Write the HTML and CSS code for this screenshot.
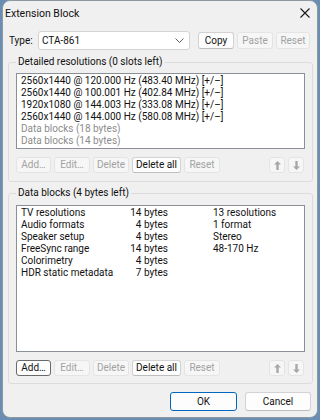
FILE: index.html
```html
<!DOCTYPE html>
<html lang="en">
<head>
  <meta charset="UTF-8">
  <title>Extension Block</title>
  <link rel="stylesheet" href="styles.css">
</head>
<body>
  <div class="window">
    <div class="titlebar">
      <span class="title">Extension Block</span>
      <svg class="close" width="10" height="10" viewBox="0 0 10 10"><path d="M0.5 0.5 L9.5 9.5 M9.5 0.5 L0.5 9.5" stroke="#1a1a1a" stroke-width="1.1" fill="none"/></svg>
    </div>
    <div class="type-row">
      <label class="type-label">Type:</label>
      <div class="combo">
        <span>CTA-861</span>
        <svg width="9" height="5" viewBox="0 0 9 5"><polyline points="0.5,0.5 4.5,4.5 8.5,0.5" stroke="#606060" fill="none"/></svg>
      </div>
      <button class="btn top copy">Copy</button>
      <button class="btn top" disabled>Paste</button>
      <button class="btn top reset" disabled>Reset</button>
    </div>

    <fieldset class="group group-res">
      <legend>Detailed resolutions (0 slots left)</legend>
      <div class="listbox list-res">
        <div class="row">2560x1440 @ 120.000 Hz (483.40 MHz) [+/–]</div>
        <div class="row">2560x1440 @ 100.001 Hz (402.84 MHz) [+/–]</div>
        <div class="row">1920x1080 @ 144.003 Hz (333.08 MHz) [+/–]</div>
        <div class="row">2560x1440 @ 144.000 Hz (580.08 MHz) [+/–]</div>
        <div class="row muted">Data blocks (18 bytes)</div>
        <div class="row muted">Data blocks (14 bytes)</div>
      </div>
      <div class="btn-row">
        <button class="btn w35" disabled>Add…</button>
        <button class="btn w36" disabled>Edit…</button>
        <button class="btn w36" disabled>Delete</button>
        <button class="btn w49">Delete all</button>
        <button class="btn w36" disabled>Reset</button>
        <span class="spacer"></span>
        <button class="btn arrow" disabled><svg width="7" height="9" viewBox="0 0 7 9"><path d="M3.5 0 L7 3.5 H4.7 V9 H2.3 V3.5 H0 Z" fill="#a8a8a8"/></svg></button>
        <button class="btn arrow" disabled><svg width="7" height="9" viewBox="0 0 7 9"><path d="M3.5 9 L7 5.5 H4.7 V0 H2.3 V5.5 H0 Z" fill="#a8a8a8"/></svg></button>
      </div>
    </fieldset>

    <fieldset class="group group-data">
      <legend>Data blocks (4 bytes left)</legend>
      <div class="listbox list-data">
        <div class="row cols"><span>TV resolutions</span><span class="size">14 bytes</span><span class="info">13 resolutions</span></div>
        <div class="row cols"><span>Audio formats</span><span class="size">4 bytes</span><span class="info">1 format</span></div>
        <div class="row cols"><span>Speaker setup</span><span class="size">4 bytes</span><span class="info">Stereo</span></div>
        <div class="row cols"><span>FreeSync range</span><span class="size">14 bytes</span><span class="info">48-170 Hz</span></div>
        <div class="row cols"><span>Colorimetry</span><span class="size">4 bytes</span><span class="info"></span></div>
        <div class="row cols"><span>HDR static metadata</span><span class="size">7 bytes</span><span class="info"></span></div>
      </div>
      <div class="btn-row">
        <button class="btn w35 focus">Add…</button>
        <button class="btn w36" disabled>Edit…</button>
        <button class="btn w36" disabled>Delete</button>
        <button class="btn w49">Delete all</button>
        <button class="btn w36" disabled>Reset</button>
        <span class="spacer"></span>
        <button class="btn arrow" disabled><svg width="7" height="9" viewBox="0 0 7 9"><path d="M3.5 0 L7 3.5 H4.7 V9 H2.3 V3.5 H0 Z" fill="#a8a8a8"/></svg></button>
        <button class="btn arrow" disabled><svg width="7" height="9" viewBox="0 0 7 9"><path d="M3.5 9 L7 5.5 H4.7 V0 H2.3 V5.5 H0 Z" fill="#a8a8a8"/></svg></button>
      </div>
    </fieldset>

    <div class="dialog-buttons">
      <button class="btn big ok">OK</button>
      <button class="btn big cancel">Cancel</button>
    </div>
  </div>
</body>
</html>
```

FILE: styles.css
```css
body { margin: 0; background: #6a8db3; font-family: Roboto, "Noto Sans", sans-serif; font-size: 10px; color: #111; }
.window { box-sizing: border-box; width: 316px; height: 418px; margin-left: 2px; background: #f0f0f0; border: 1px solid #8e98a3; border-radius: 8px; overflow: hidden; }

.titlebar { display: flex; align-items: center; justify-content: space-between; height: 24px; padding: 0 7px 0 2px; }
.title { font-size: 10.5px; }

.type-row { display: flex; align-items: center; height: 19px; margin-top: 6px; padding-left: 6px; }
.type-label { width: 29px; }
.combo { box-sizing: border-box; width: 152px; height: 19px; display: flex; align-items: center; justify-content: space-between; padding: 0 5px 0 3px; background: #fff; border: 1px solid #d3d3d3; border-radius: 3px; }

.btn { box-sizing: border-box; height: 16px; padding: 0; font: inherit; line-height: 14px; color: #111; background: #fdfdfd; border: 1px solid #d2d2d2; border-bottom-color: #bdbdbd; border-radius: 3px; }
.btn:disabled { color: #a2a2a2; background: #f6f6f6; border-color: #e4e4e4; }
.btn.top { height: 17px; width: 36px; margin-left: 3px; }
.btn.copy { margin-left: 8px; }
.btn.reset { width: 34px; }
.btn.focus { border-color: #6a6a6a; }
.w35 { width: 35px; }
.w36 { width: 36px; }
.w49 { width: 49px; }
.btn.arrow { width: 16px; display: flex; align-items: center; justify-content: center; }

.group { margin: 6px 4px 0 5px; padding: 5px 7px 8px 7px; border: 1px solid #dcdcdc; border-radius: 3px; min-width: 0; }
.group legend { padding: 0 2px; line-height: 12px; }
.group-data { margin-top: 5px; padding-top: 6px; padding-bottom: 7px; }

.listbox { box-sizing: border-box; background: #fff; border: 1px solid #8b9097; padding: 1px 4px; }
.list-res { height: 76px; }
.list-data { height: 147px; }
.row { line-height: 12px; white-space: nowrap; }
.row.muted { color: #8c8c8c; }
.cols { display: grid; grid-template-columns: 100px 47px 1fr; }
.size { text-align: right; }
.info { padding-left: 45px; }

.btn-row { display: flex; gap: 3px; margin-top: 8px; margin-right: 1px; }
.spacer { flex: 1; }

.dialog-buttons { display: flex; justify-content: flex-end; gap: 8px; margin-top: 8px; padding-right: 6px; }
.btn.big { height: 19px; line-height: 17px; }
.btn.ok { width: 67px; border-color: #0067c0; }
.btn.cancel { width: 66px; }
```
